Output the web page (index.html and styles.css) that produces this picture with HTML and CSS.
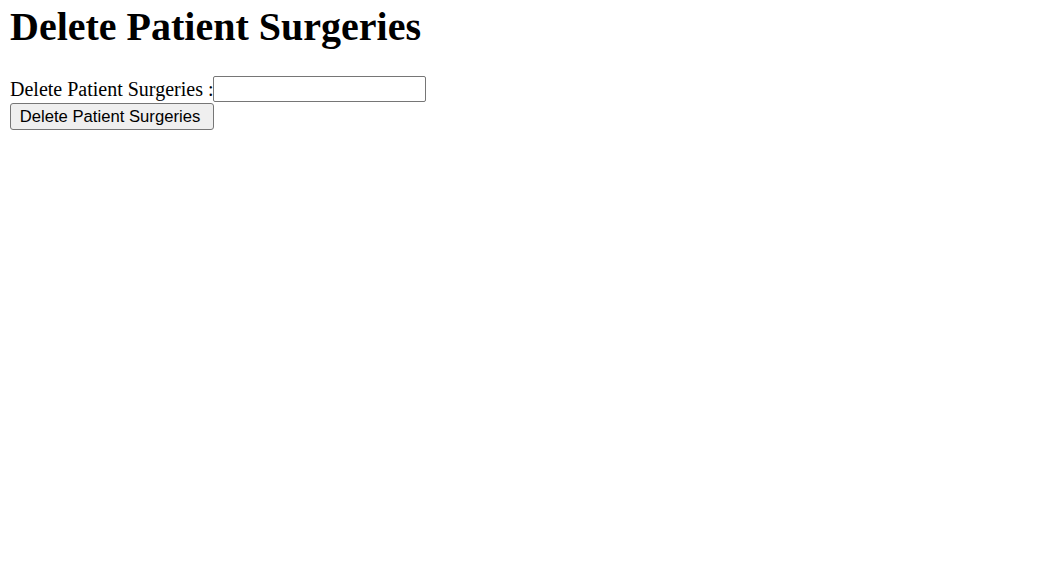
FILE: index.html
```html
<!DOCTYPE html>
<html>
<head>
<meta charset="utf-8">
<title>Delete Patient Surgeries</title>
<link rel="stylesheet" href="styles.css">
</head>
<body>
<h1 class="title">Delete Patient Surgeries</h1>
<form class="form">
  <div class="row"><label class="label" for="sid">Delete Patient Surgeries :</label><input class="field" type="text" id="sid" name="sid"></div>
  <div class="row-btn"><button class="btn" type="submit">Delete Patient Surgeries</button></div>
</form>
</body>
</html>
```

FILE: styles.css
```css
html, body {
  background: #ffffff;
}
body {
  margin: 0 10px;
  padding-top: 4px;
  font-family: "Liberation Serif", "Times New Roman", serif;
  color: #000000;
}
.title {
  font-size: 40px;
  font-weight: bold;
  line-height: 46px;
  margin: 0 0 26px 0;
}
.form {
  margin: 0;
}
.row {
  display: flex;
  align-items: center;
  height: 26px;
}
.label {
  font-size: 20px;
  line-height: 23px;
}
.row-btn {
  display: flex;
  padding-top: 1px;
}
.field {
  box-sizing: border-box;
  width: 213px;
  height: 26px;
  margin: 0;
  padding: 1px 3px;
  border: 1px solid #767676;
  border-radius: 2px;
  font-family: "Liberation Sans", Arial, sans-serif;
  font-size: 16.67px;
}
.btn {
  box-sizing: border-box;
  width: 204px;
  height: 27px;
  margin: 0;
  padding: 1px 10px 1px 6px;
  border: 1px solid #767676;
  border-radius: 3px;
  background: #efefef;
  color: #000000;
  font-family: "Liberation Sans", Arial, sans-serif;
  font-size: 16.67px;
}
```
